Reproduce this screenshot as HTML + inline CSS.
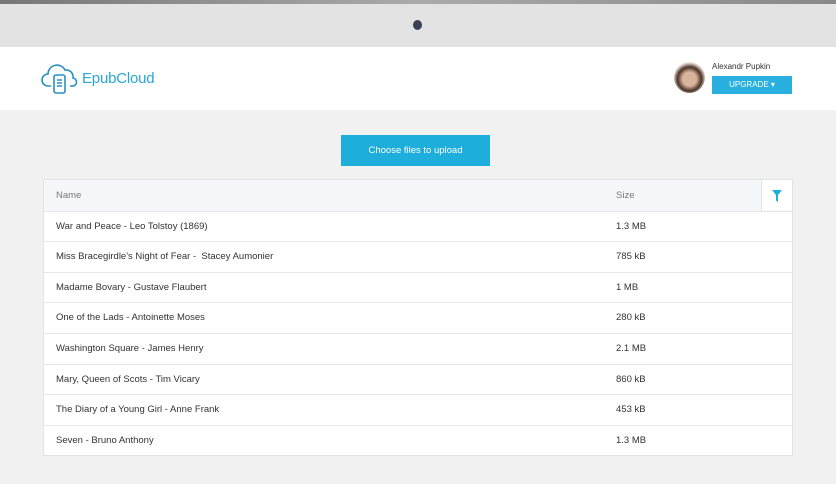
<!DOCTYPE html>
<html><head><style>
body{margin:0;width:836px;height:484px;background:#f1f1f1;font-family:"Liberation Sans",sans-serif;position:relative;overflow:hidden}
.top{position:absolute;left:0;top:0;width:836px;height:47px;background:#e3e3e3}
.top:before{content:"";position:absolute;left:0;top:0;width:836px;height:4px;background:linear-gradient(90deg,#777,#aaa 50%,#888)}
.cam{position:absolute;left:413px;top:20px;width:9px;height:10px;border-radius:50%;background:#3a3f55}
.hdr{position:absolute;left:0;top:47px;width:836px;height:63px;background:#fff}
.logo{position:absolute;left:82px;top:70px;font-size:15px;color:#29a6d5;letter-spacing:-0.2px}
.name{position:absolute;left:712px;top:62px;font-size:8px;color:#333}
.up{position:absolute;left:712px;top:76px;width:80px;height:18px;background:#2ab0df;color:#fff;font-size:8px;line-height:18px;text-align:center}
.av{position:absolute;left:674px;top:62px;width:31px;height:31px;border-radius:50%;background:radial-gradient(circle at 50% 55%,#d9b49c 30%,#4a3326 52%,#e8ddd4 70%)}
.btn{position:absolute;left:341px;top:135px;width:149px;height:31px;background:#1eaedb;color:#fff;font-size:9.5px;line-height:31px;text-align:center}
.tbl{position:absolute;left:43px;top:179px;width:748px;background:#fff;border:1px solid #e3e3e3}
.row{height:30.6px;line-height:30px;border-top:1px solid #e6e6e6;font-size:9.5px;color:#333;position:relative;box-sizing:border-box}
.row span{position:absolute;left:12px}.row b{position:absolute;left:572px;font-weight:normal}
.th{background:#f6f7f9;border-top:none;color:#777;line-height:31px}
.f{position:absolute;right:0;top:0;width:30px;height:30px;border-left:1px solid #e3e3e3;background:#fff}
</style></head><body>
<div class="top"><div class="cam"></div></div>
<div class="hdr"></div>
<svg style="position:absolute;left:41px;top:62px" width="38" height="34" viewBox="0 0 38 34" fill="none" stroke="#2a8fc3" stroke-width="1.6"><path d="M10 24H7a6 6 0 0 1 0-12 9 9 0 0 1 17-4 7 7 0 0 1 8 8 4 4 0 0 1-1 8h-2"/><rect x="13" y="13" width="11" height="18" rx="2"/><path d="M16 18h5M16 21h5M16 24h5"/></svg>
<div class="logo">EpubCloud</div>
<div class="av"></div>
<div class="name">Alexandr Pupkin</div>
<div class="up">UPGRADE ▾</div>
<div class="btn">Choose files to upload</div>
<div class="tbl">
<div class="row th"><span>Name</span><b>Size</b><div class="f"><svg style="position:absolute;left:10px;top:10px" width="10" height="12" viewBox="0 0 10 12"><path d="M0 0h10L6 5v7L4 10.5V5z" fill="#1eaedb"/></svg></div></div>
<div class="row"><span>War and Peace - Leo Tolstoy (1869)</span><b>1.3 MB</b></div>
<div class="row"><span>Miss Bracegirdle's Night of Fear -&nbsp; Stacey Aumonier</span><b>785 kB</b></div>
<div class="row"><span>Madame Bovary - Gustave Flaubert</span><b>1 MB</b></div>
<div class="row"><span>One of the Lads - Antoinette Moses</span><b>280 kB</b></div>
<div class="row"><span>Washington Square - James Henry</span><b>2.1 MB</b></div>
<div class="row"><span>Mary, Queen of Scots - Tim Vicary</span><b>860 kB</b></div>
<div class="row"><span>The Diary of a Young Girl - Anne Frank</span><b>453 kB</b></div>
<div class="row"><span>Seven - Bruno Anthony</span><b>1.3 MB</b></div>
</div>
</body></html>
